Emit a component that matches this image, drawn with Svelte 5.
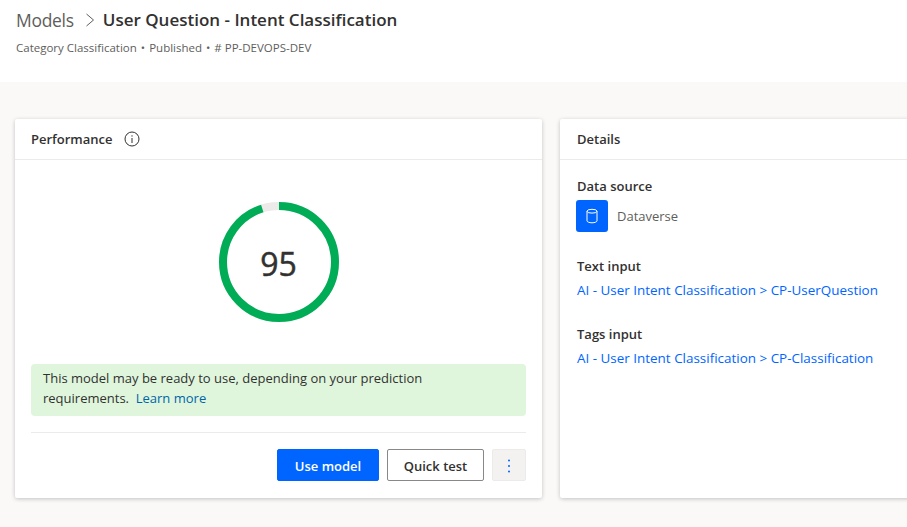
<script>
  const score = 95;
  const radius = 56;
  const circumference = 2 * Math.PI * radius;
  const filled = (circumference * score) / 100;

  const details = [
    { label: 'Text input', link: 'AI - User Intent Classification > CP-UserQuestion' },
    { label: 'Tags input', link: 'AI - User Intent Classification > CP-Classification' }
  ];
</script>

<div class="page">
  <header class="top">
    <div class="crumbs">
      <span class="parent">Models</span>
      <svg class="chevron" viewBox="0 0 10 16" width="10" height="16" aria-hidden="true">
        <path d="M1.5 2 L8.5 8 L1.5 14" fill="none" stroke="#605e5c" stroke-width="1" />
      </svg>
      <h1>User Question - Intent Classification</h1>
    </div>
    <p class="meta">Category Classification <i>•</i> Published <i>•</i> # PP-DEVOPS-DEV</p>
  </header>

  <main class="cards">
    <section class="card perf">
      <div class="card-head">
        <h2>Performance</h2>
        <svg class="info" viewBox="0 0 16 16" width="16" height="16" aria-hidden="true">
          <circle cx="8" cy="8" r="7" fill="none" stroke="#323130" stroke-width="1" />
          <path d="M8 7 V12" stroke="#323130" stroke-width="1" />
          <circle cx="8" cy="4.9" r="0.7" fill="#323130" />
        </svg>
      </div>
      <div class="perf-body">
        <div class="gauge">
          <svg viewBox="0 0 120 120" width="120" height="120" aria-hidden="true">
            <circle cx="60" cy="60" r={radius} fill="none" stroke="#edebe9" stroke-width="8" />
            <circle
              cx="60"
              cy="60"
              r={radius}
              fill="none"
              stroke="#00ad56"
              stroke-width="8"
              stroke-dasharray="{filled} {circumference}"
              transform="rotate(-90 60 60)"
            />
          </svg>
          <span class="score">{score}</span>
        </div>
        <div class="notice">
          This model may be ready to use, depending on your prediction requirements.&nbsp; <a href="#more">Learn more</a>
        </div>
        <div class="actions">
          <button class="btn primary">Use model</button>
          <button class="btn test">Quick test</button>
          <button class="btn more" aria-label="More">
            <svg viewBox="0 0 4 16" width="4" height="16" aria-hidden="true">
              <circle cx="2" cy="2.5" r="1" fill="#0065ff" />
              <circle cx="2" cy="8" r="1" fill="#0065ff" />
              <circle cx="2" cy="13.5" r="1" fill="#0065ff" />
            </svg>
          </button>
        </div>
      </div>
    </section>

    <section class="card info-card">
      <div class="card-head details-head">
        <h2>Details</h2>
      </div>
      <div class="details-body">
        <div class="field">
          <h3>Data source</h3>
          <div class="source">
            <span class="tile">
              <svg viewBox="0 0 16 16" width="16" height="16" aria-hidden="true">
                <ellipse cx="8" cy="3.2" rx="5" ry="1.9" fill="none" stroke="#fff" stroke-width="1" />
                <path d="M3 3.2 V12.8 C3 13.9 5.2 14.8 8 14.8 C10.8 14.8 13 13.9 13 12.8 V3.2" fill="none" stroke="#fff" stroke-width="1" />
              </svg>
            </span>
            <span class="source-name">Dataverse</span>
          </div>
        </div>
        {#each details as d}
          <div class="field">
            <h3>{d.label}</h3>
            <a class="link" href="#source">{d.link}</a>
          </div>
        {/each}
      </div>
    </section>
  </main>
</div>

<style>
  :global(body) {
    margin: 0;
    background: #faf9f8;
    overflow: hidden;
  }
  .page {
    width: 907px;
    height: 527px;
    overflow: hidden;
    font-family: "Open Sans", "Noto Sans", sans-serif;
    color: #323130;
  }
  .top {
    height: 82px;
    box-sizing: border-box;
    background: #fff;
    padding: 8px 16px 0;
  }
  .crumbs {
    display: flex;
    align-items: center;
    height: 24px;
  }
  .parent {
    font-size: 17.5px;
    color: #605e5c;
    letter-spacing: -0.3px;
  }
  .chevron {
    margin: 0 8px 0 11px;
  }
  h1 {
    margin: -1px 0 0;
    font-size: 17px;
    font-weight: 600;
    color: #323130;
  }
  .meta {
    margin: 8px 0 0;
    font-size: 11.5px;
    line-height: 16px;
    color: #605e5c;
  }
  .meta i {
    font-style: normal;
    margin: 0 1px;
  }
  .cards {
    display: flex;
    gap: 18px;
    padding: 37px 0 0 15px;
  }
  .card {
    background: #fff;
    height: 379px;
    box-sizing: border-box;
    border-radius: 2px;
    box-shadow: 0 1px 4px rgba(0, 0, 0, 0.22);
    flex: none;
  }
  .perf {
    width: 527px;
  }
  .info-card {
    width: 400px;
  }
  .card-head {
    height: 41px;
    box-sizing: border-box;
    border-bottom: 1px solid #edebe9;
    display: flex;
    align-items: center;
    gap: 11px;
    padding: 0 16px;
  }
  .details-head {
    padding-left: 17px;
  }
  h2 {
    margin: 0;
    font-size: 13px;
    font-weight: 600;
  }
  .perf-body {
    padding: 42px 16px 0;
  }
  .gauge {
    position: relative;
    width: 120px;
    height: 120px;
    margin: 0 auto;
  }
  .gauge svg {
    display: block;
  }
  .score {
    position: absolute;
    inset: 0;
    padding-top: 2px;
    display: flex;
    align-items: center;
    justify-content: center;
    font-size: 32px;
    font-weight: 400;
    -webkit-text-stroke: 0.5px #323130;
    color: #323130;
  }
  .notice {
    margin-top: 42px;
    background: #dff6dd;
    border-radius: 4px;
    padding: 4px 12px 0;
    height: 52px;
    box-sizing: border-box;
    font-size: 13px;
    line-height: 20px;
  }
  .notice a {
    color: #0065a8;
    text-decoration: none;
  }
  .actions {
    margin-top: 16px;
    border-top: 1px solid #edebe9;
    padding-top: 16px;
    display: flex;
    justify-content: flex-end;
    gap: 8px;
  }
  .btn {
    height: 32px;
    box-sizing: border-box;
    padding: 1px 0 0;
    border: 1px solid #8a8886;
    border-radius: 2px;
    background: #fff;
    color: #323130;
    font: 600 13px "Open Sans", "Noto Sans", sans-serif;
  }
  .primary {
    width: 102px;
    background: #0065ff;
    border-color: #0065ff;
    color: #fff;
  }
  .test {
    width: 97px;
  }
  .more {
    width: 34px;
    background: #f3f2f1;
    border-color: #edebe9;
    display: flex;
    align-items: center;
    justify-content: center;
  }
  .details-body {
    padding: 17px 16px 0 17px;
    display: flex;
    flex-direction: column;
    gap: 26px;
  }
  h3 {
    margin: 0;
    font-size: 13px;
    line-height: 18px;
    font-weight: 600;
  }
  .source {
    display: flex;
    align-items: center;
    gap: 9px;
    margin: 5px 0 -1px -1px;
  }
  .tile {
    width: 32px;
    height: 32px;
    background: #0065ff;
    border-radius: 3px;
    display: flex;
    align-items: center;
    justify-content: center;
  }
  .source-name {
    font-size: 13px;
    color: #605e5c;
  }
  .link {
    display: block;
    margin-top: 6px;
    font-size: 13.45px;
    line-height: 18px;
    color: #0065ff;
    text-decoration: none;
  }
</style>
